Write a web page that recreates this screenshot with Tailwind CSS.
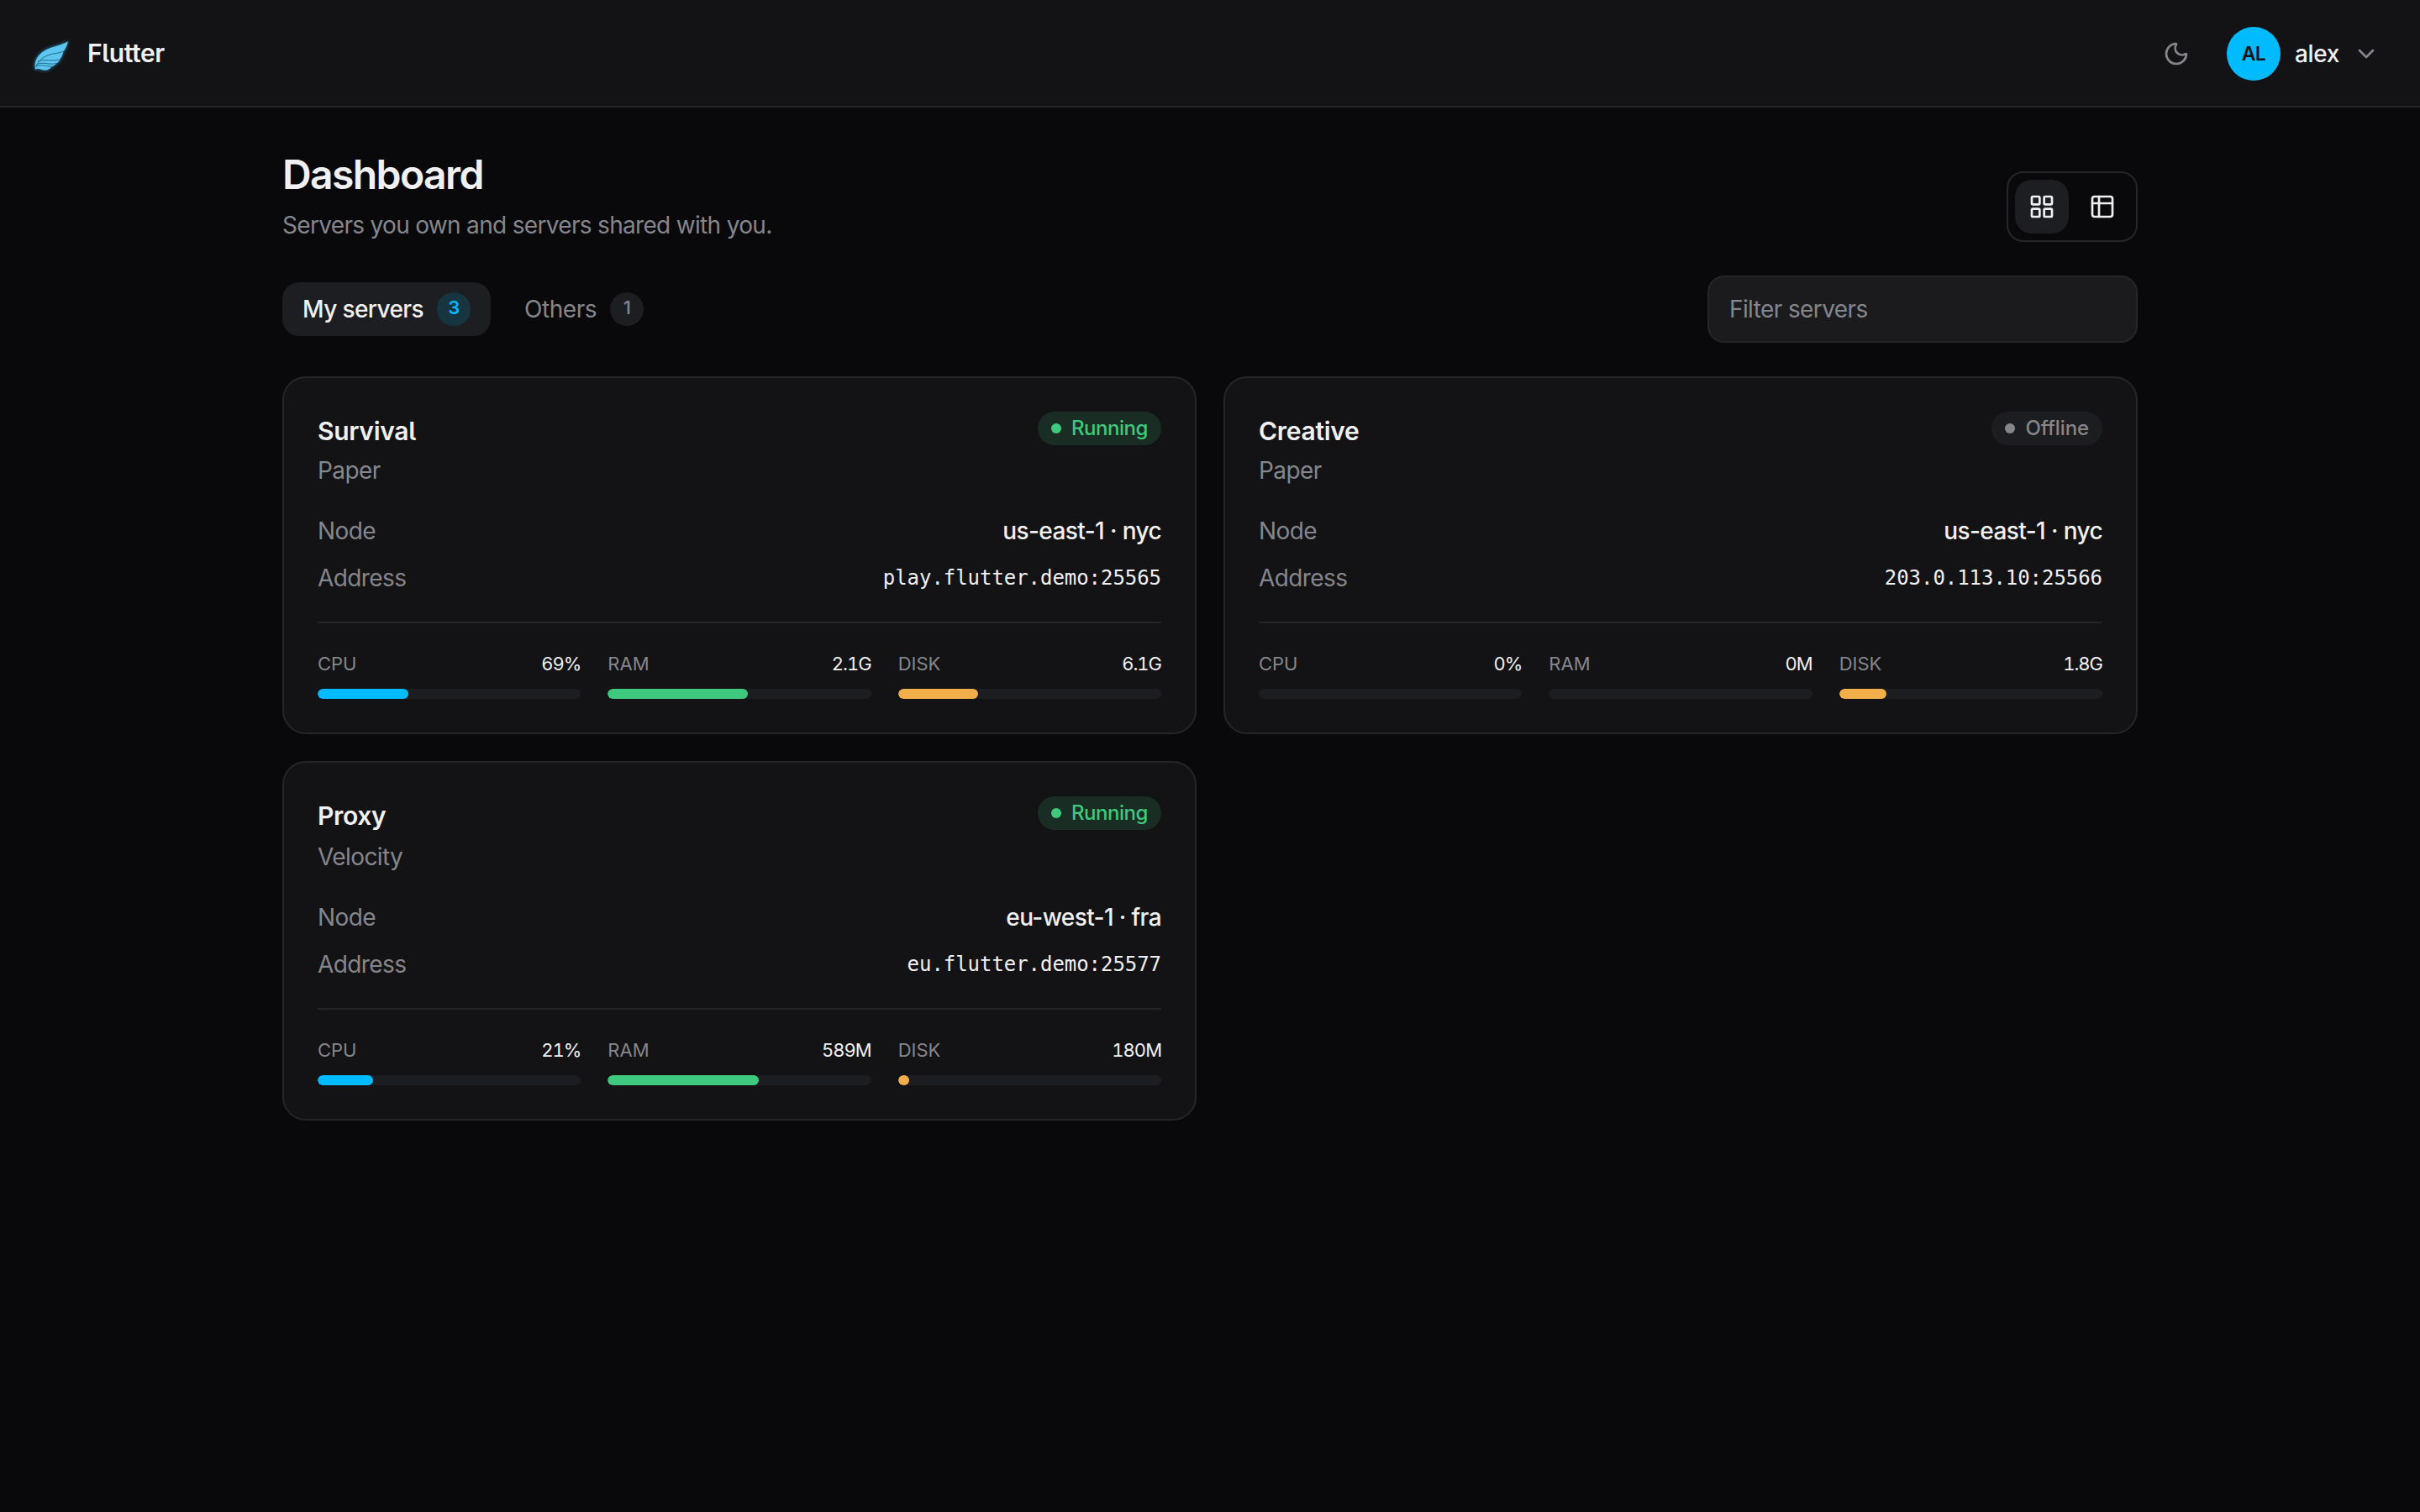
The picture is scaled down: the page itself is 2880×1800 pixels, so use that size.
<!DOCTYPE html>
<html lang="en">

<head>
  <meta charset="UTF-8">
  <meta name="viewport" content="width=device-width, initial-scale=1.0">
  <title>Dashboard - Flutter</title>
  <script src="https://cdn.jsdelivr.net/npm/@tailwindcss/browser@4"></script>
</head>

<body class="min-h-screen bg-[#09090b] font-[Inter,sans-serif] text-[28px] leading-10 tracking-[-0.6px] text-[#f0f0f3]">
  <header class="flex h-32 items-center justify-between bg-[#131315] px-10 shadow-[inset_0_-2px_0_#262628]">
    <a href="#" class="flex items-center gap-5 pb-0.5">
      <svg class="size-11 overflow-visible drop-shadow-[0_0_2px_#38bdf8b3]" viewBox="60 63 132 132" fill="none">
        <path d="M183 87C168 100 130 106 108 116C80 129 62 152 65 182L67 190C70 185 74 184 80 186C90 189 98 192 108 190C116 188 121 184 124 178C132 176 139 171 141 166C149 162 153 157 154 151C161 144 164 134 166 124C174 114 180 102 183 87Z" fill="#5cc6f0" />
        <path d="M68 178C82 146 112 134 136 131C150 129 158 127 166 123M76 160C96 149 122 160 152 153M71 170C92 160 112 172 140 167M68 178C86 168 104 178 124 177" stroke="#1b5a78" stroke-width="2.5" />
      </svg>
      <span class="text-[30px] font-semibold tracking-[-0.4px] [font-feature-settings:'cv05']">Flutter</span>
    </a>
    <div class="flex items-center gap-4">
      <button class="flex size-16 items-center justify-center text-[#85868c]">
        <svg class="size-8" viewBox="0 0 24 24" fill="none" stroke="currentColor" stroke-width="2" stroke-linecap="round" stroke-linejoin="round">
          <path d="M20.985 12.486a9 9 0 1 1-9.473-9.472c.405-.022.617.46.402.803a6 6 0 0 0 8.268 8.268c.344-.215.825-.004.803.401" />
        </svg>
      </button>
      <button class="flex items-center gap-4 pr-2 pl-3">
        <span class="flex size-16 items-center justify-center rounded-full bg-[#00bbff] text-[23px] font-semibold text-[#131315]">AL</span>
        <span class="w-[54px] pl-px font-medium tracking-[-0.4px]">alex</span>
        <svg class="size-8 text-[#85868c]" viewBox="0 0 24 24" fill="none" stroke="currentColor" stroke-width="2" stroke-linecap="round" stroke-linejoin="round">
          <path d="m6 9 6 6 6-6" />
        </svg>
      </button>
    </div>
  </header>

  <main class="mx-auto max-w-[2304px] px-12 pt-12">
    <div class="flex items-end justify-between">
      <div>
        <h1 class="text-5xl leading-16 font-semibold tracking-[-1.6px]">Dashboard</h1>
        <p class="mt-2 text-[#85868c] tracking-[-0.68px]">Servers you own and servers shared with you.</p>
      </div>
      <div class="flex gap-2 rounded-[20px] border-2 border-[#262628] p-2">
        <button class="flex size-16 items-center justify-center rounded-[20px] bg-[#1d1e22]">
          <svg class="size-8" viewBox="0 0 24 24" fill="none" stroke="currentColor" stroke-width="2" stroke-linecap="round" stroke-linejoin="round">
            <rect width="7" height="7" x="3" y="3" rx="1" />
            <rect width="7" height="7" x="14" y="3" rx="1" />
            <rect width="7" height="7" x="14" y="14" rx="1" />
            <rect width="7" height="7" x="3" y="14" rx="1" />
          </svg>
        </button>
        <button class="flex size-16 items-center justify-center rounded-[20px]">
          <svg class="size-8" viewBox="0 0 24 24" fill="none" stroke="currentColor" stroke-width="2" stroke-linecap="round" stroke-linejoin="round">
            <rect width="18" height="18" x="3" y="3" rx="2" />
            <path d="M3 9h18M9 3v18" />
          </svg>
        </button>
      </div>
    </div>

    <div class="mt-10 flex items-center justify-between">
      <div class="flex gap-4">
        <button class="flex h-16 items-center gap-4 rounded-[20px] bg-[#1d1e22] px-6">
          <span class="font-medium tracking-[-0.6px]">My servers</span>
          <span class="flex size-10 items-center justify-center rounded-full bg-[#173540] pb-1 text-[22px] font-semibold text-[#00bbff]">3</span>
        </button>
        <button class="flex h-16 items-center gap-4 rounded-[20px] px-6 text-[#85868c]">
          <span class="tracking-[-0.45px]">Others</span>
          <span class="flex size-10 items-center justify-center rounded-full bg-[#1d1e22] pb-1 text-[22px] font-medium">1</span>
        </button>
      </div>
      <input type="text" placeholder="Filter servers" class="h-20 w-[512px] rounded-[20px] border-2 border-[#262628] bg-[#1b1b1d] px-6 placeholder:text-[#85868c]">
    </div>

    <div id="servers" class="mt-10 grid grid-cols-2 items-start gap-8"></div>
  </main>

  <script>
    const servers = [
      {
        name: 'Survival', software: 'Paper', status: 'Running', node: 'us-east-1 · nyc', address: 'play.flutter.demo:25565',
        cpu: ['69%', 34.5], ram: ['2.1G', 53.2], disk: ['6.1G', 30.5]
      },
      {
        name: 'Creative', software: 'Paper', status: 'Offline', node: 'us-east-1 · nyc', address: '203.0.113.10:25566',
        cpu: ['0%', 0], ram: ['0M', 0], disk: ['1.8G', 18]
      },
      {
        name: 'Proxy', software: 'Velocity', status: 'Running', node: 'eu-west-1 · fra', address: 'eu.flutter.demo:25577',
        cpu: ['21%', 21], ram: ['589M', 57.5], disk: ['180M', 4.4]
      },
    ]

    const statusColors = {
      Running: 'bg-[#1a2d24] text-[#3fc97f] tracking-[-0.45px]',
      Offline: 'bg-[#1c1d20] text-[#85868c] tracking-[-0.1px]',
    }

    // one usage column: label, value and bar
    function meter(label, [value, percent], color) {
      return `
        <div>
          <div class="flex justify-between text-[22px] leading-8 tracking-normal">
            <span class="text-[#85868c]">${label}</span>
            <span class="tracking-[-1px] tabular-nums">${value}</span>
          </div>
          <div class="mt-3.5 h-3 overflow-hidden rounded-full bg-[#1c1d21]">
            <div class="h-full rounded-full ${color}" style="width: ${percent}%"></div>
          </div>
        </div>`
    }

    document.querySelector('#servers').innerHTML = servers.map(server => `
      <article class="rounded-[28px] border-2 border-[#262628] bg-[#131315] p-10">
        <div class="flex items-start justify-between">
          <div>
            <h2 class="text-[30px] leading-[46px] font-semibold tracking-[-0.3px] [font-feature-settings:'cv05']">${server.name}</h2>
            <p class="leading-12 text-[#85868c] [article:nth-child(3)_&]:pt-0.5">${server.software}</p>
          </div>
          <span class="flex h-10 items-center gap-3 rounded-full px-4 text-2xl font-medium ${statusColors[server.status]}">
            <span class="size-3 rounded-full bg-current"></span>
            ${server.status}
          </span>
        </div>
        <dl class="mt-7 flex flex-col gap-4">
          <div class="flex justify-between">
            <dt class="text-[#85868c]">Node</dt>
            <dd class="font-medium">${server.node}</dd>
          </div>
          <div class="flex justify-between">
            <dt class="text-[#85868c]">Address</dt>
            <dd class="font-['DejaVu_Sans_Mono',monospace] text-2xl leading-10 tracking-[-0.05px]">${server.address}</dd>
          </div>
        </dl>
        <div class="mt-8 grid grid-cols-3 gap-8 border-t-2 border-[#262628] pt-8">
          ${meter('CPU', server.cpu, 'bg-[#00bbff]')}
          ${meter('RAM', server.ram, 'bg-[#3fc97f]')}
          ${meter('DISK', server.disk, 'bg-[#f2ae49]')}
        </div>
      </article>`).join('')
  </script>
</body>

</html>
